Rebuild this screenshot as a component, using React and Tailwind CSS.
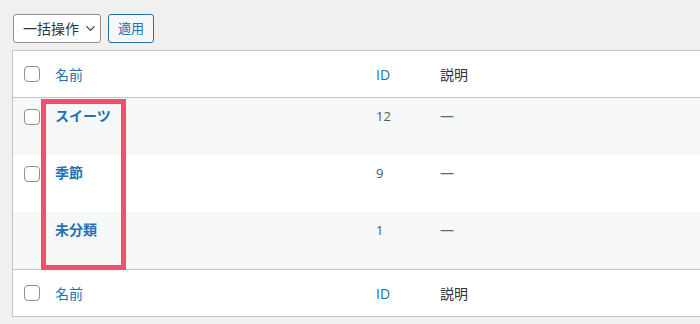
import { ChevronDown } from "lucide-react";

const rows = [
  { name: "スイーツ", id: 12, check: true, bg: "bg-[#f6f7f7]" },
  { name: "季節", id: 9, check: true, bg: "bg-white" },
  { name: "未分類", id: 1, check: false, bg: "bg-[#f6f7f7]" },
];

const font = { fontFamily: '"Open Sans", "Noto Sans CJK JP", sans-serif' };

function Box() {
  return <span className="block w-4 h-4 rounded-[4px] border border-[#8c8f94] bg-white" />;
}

function HeadRow({ border }) {
  return (
    <div className={`flex h-[47px] items-center bg-white text-[14px] ${border}`}>
      <div className="w-[42px] pl-[11px]">
        <Box />
      </div>
      <div className="w-[321px] text-[#2271b1]">名前</div>
      <div className="w-[64px] text-[#2271b1]">ID</div>
      <div className="text-[#2c3338]">説明</div>
    </div>
  );
}

export default function App() {
  return (
    <div className="w-[700px] h-[324px] overflow-hidden bg-[#f0f0f1] pt-[14px]" style={font}>
      <div className="flex gap-[7px] pl-[13px]">
        <button className="flex items-center gap-1 h-[29px] w-[88px] pl-[9px] rounded-[3px] border border-[#8c8f94] bg-white text-[14px] text-[#2c3338]">
          一括操作
          <ChevronDown size={15} strokeWidth={1.8} />
        </button>
        <button className="h-[29px] w-[46px] rounded-[3px] border border-[#2271b1] bg-[#f6f7f7] text-[13px] text-[#2271b1]">
          適用
        </button>
      </div>

      <div className="relative ml-[12px] mt-[7px] w-[720px] border border-[#c3c4c7]">
        <HeadRow border="border-b border-[#c3c4c7]" />
        {rows.map((r) => (
          <div key={r.id} className={`flex h-[57px] items-start pt-[9px] text-[14px] ${r.bg}`}>
            <div className="w-[42px] pl-[11px] pt-[2px]">{r.check && <Box />}</div>
            <div className="w-[321px] font-bold text-[#2271b1] leading-[18px]">{r.name}</div>
            <div className="w-[64px] text-[13px] text-[#50575e] leading-[18px]">{r.id}</div>
            <div className="text-[#646970] leading-[18px]">—</div>
          </div>
        ))}
        <HeadRow border="border-t border-[#c3c4c7]" />

        <div className="absolute left-[28px] top-[48px] w-[85px] h-[171px] border-[5px] border-[#f0506e]" />
      </div>
    </div>
  );
}
